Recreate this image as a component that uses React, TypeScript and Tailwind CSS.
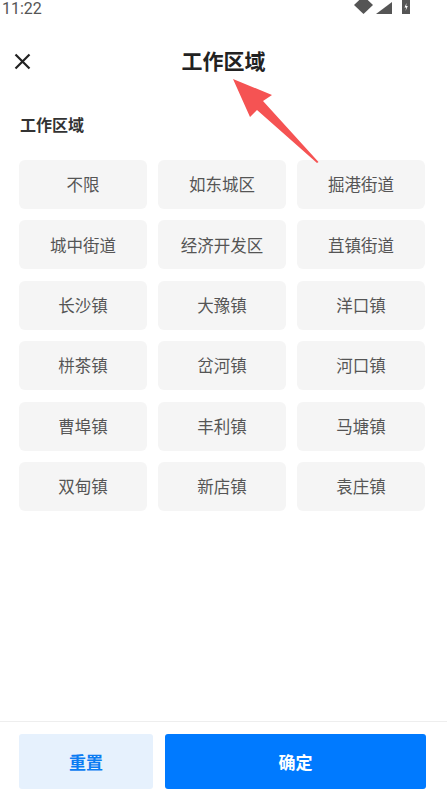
import React from "react";

const areas = [
  "不限",
  "如东城区",
  "掘港街道",
  "城中街道",
  "经济开发区",
  "苴镇街道",
  "长沙镇",
  "大豫镇",
  "洋口镇",
  "栟茶镇",
  "岔河镇",
  "河口镇",
  "曹埠镇",
  "丰利镇",
  "马塘镇",
  "双甸镇",
  "新店镇",
  "袁庄镇",
];

const font = { fontFamily: '"Noto Sans CJK SC", Roboto, sans-serif' };

const StatusBar: React.FC = () => (
  <div className="h-[40px] flex items-start justify-between px-[2px]">
    <span
      className="text-[16px] leading-[17px] text-[#555]"
      style={{ fontFamily: "Roboto, sans-serif" }}
    >
      11:22
    </span>
    <div className="flex items-start gap-[3px] pr-[34px]">
      <svg width="19" height="14" viewBox="0 0 19 14">
        <path d="M0 5 L9.5 -4 L19 5 L9.5 14 Z" fill="#555" />
      </svg>
      <svg width="17" height="14" viewBox="0 0 17 14">
        <path d="M0 14 L16 2 L16 14 Z" fill="#555" />
      </svg>
      <svg width="9" height="14" viewBox="0 0 9 14" className="ml-[6px]">
        <rect x="0" y="0" width="8" height="14" fill="#555" />
        <path d="M4.5 3 L2.5 7.5 L4.2 7.5 L3.5 11 L5.8 6 L4.2 6 Z" fill="#fff" />
      </svg>
    </div>
  </div>
);

const App: React.FC = () => {
  return (
    <div className="relative h-[795px] w-[447px] bg-white flex flex-col overflow-hidden" style={font}>
      <StatusBar />
      <div className="relative h-[42px] flex items-center justify-center">
        <button className="absolute left-[13px] top-[12px] w-[18px] h-[18px] flex items-center justify-center">
          <svg width="17" height="17" viewBox="0 0 17 17">
            <path d="M1.5 1.5 L15.5 15.5 M15.5 1.5 L1.5 15.5" stroke="#222" strokeWidth="2.2" />
          </svg>
        </button>
        <h1 className="text-[21px] font-bold text-[#222]">工作区域</h1>
      </div>
      <div className="pt-[30px] px-[20px]">
        <h2 className="text-[16px] leading-[24px] font-bold text-[#333]">工作区域</h2>
      </div>
      <div className="mt-[24px] pl-[19px] pr-[22px] grid grid-cols-3 gap-x-[11px] gap-y-[11.4px]">
        {areas.map((a) => (
          <button
            key={a}
            className="h-[49px] rounded-[6px] bg-[#f5f5f5] text-[16.5px] text-[#555] flex items-center justify-center"
          >
            {a}
          </button>
        ))}
      </div>
      <div className="flex-1" />
      <div className="border-t border-[#eeeeee] pt-[12px] pb-[6px] pl-[19px] pr-[21px] flex gap-[12px]">
        <button className="w-[134px] h-[55px] rounded-[3px] bg-[#e6f1fd] text-[17px] font-bold text-[#0b7cf2]">
          重置
        </button>
        <button className="flex-1 h-[55px] rounded-[3px] bg-[#007aff] text-[17px] font-bold text-white">
          确定
        </button>
      </div>
      <svg
        className="absolute left-0 top-0 pointer-events-none"
        width="447"
        height="795"
        viewBox="0 0 447 795"
      >
        <path
          d="M233 79 L272 95 L263 101 L318.5 162 L317 163 L257 110 L250 117 Z"
          fill="#f55353"
        />
      </svg>
    </div>
  );
};

export default App;
